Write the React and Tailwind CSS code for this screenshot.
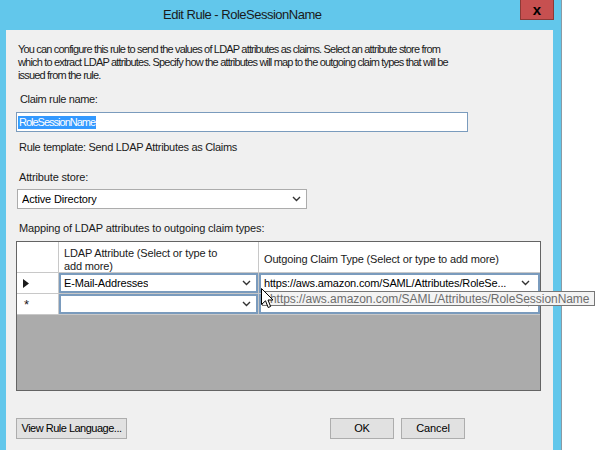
import React from "react";

const font = { fontFamily: '"Liberation Sans", Arial, sans-serif' };

const Chevron = () => (
  <svg width="9" height="6" viewBox="0 0 9 6" className="shrink-0">
    <path d="M1 1 L4.5 4.5 L8 1" fill="none" stroke="#333" strokeWidth="1.4" />
  </svg>
);

const Combo = ({ text, className = "" }) => (
  <div
    className={`flex h-full w-full items-center justify-between border border-[#7a9bbd] bg-white pl-[3px] pr-[5px] text-[11px] text-black ${className}`}
  >
    <span className="truncate whitespace-nowrap">{text}</span>
    <Chevron />
  </div>
);

const Button = ({ children, className = "" }) => (
  <div
    className={`flex h-[21px] items-center justify-center whitespace-nowrap border border-[#adadad] bg-[#e1e1e1] text-[11px] text-black ${className}`}
  >
    {children}
  </div>
);

const App = () => {
  return (
    <div className="relative flex h-[450px] w-[604px] overflow-hidden bg-white" style={font}>
      <div className="flex w-[562px] flex-col border-r border-[#8a9aa4] bg-[#62c7eb]">
        {/* title bar */}
        <div className="relative flex h-[30px] items-center pl-[163px]">
          <span className="text-[13px] tracking-[-0.5px] text-[#1a1a1a]">Edit Rule - RoleSessionName</span>
          <div className="absolute right-[7px] top-0 flex h-[20px] w-[34px] items-center justify-center border border-t-0 border-[#8c3a36] bg-[#c75050]">
            <span className="text-[15px] font-bold leading-none text-black">x</span>
          </div>
        </div>

        {/* client area */}
        <div className="ml-[6px] mr-[8px] flex flex-1 flex-col bg-[#f0f0f0] px-[10px] text-[11px] leading-[13px] tracking-[-0.15px] text-[#1a1a1a]">
          <p className="ml-[2px] mt-[13px] whitespace-nowrap tracking-[-0.82px]">
            You can configure this rule to send the values of LDAP attributes as claims. Select an attribute store from
            <br />
            which to extract LDAP attributes. Specify how the attributes will map to the outgoing claim types that will be
            <br />
            issued from the rule.
          </p>

          <div className="ml-[4px] mt-[11px] tracking-[-0.35px]">Claim rule name:</div>
          <div className="mt-[6px] flex h-[20px] w-[452px] items-center border border-[#7a9bbd] bg-white pl-[1px]">
            <span className="bg-[#3399ff] px-[1px] tracking-[-1px] text-white">RoleSessionName</span>
          </div>

          <div className="ml-[3px] mt-[9px] tracking-[-0.3px]">Rule template: Send LDAP Attributes as Claims</div>

          <div className="ml-[3px] mt-[17px]">Attribute store:</div>
          <div className="ml-[1px] mt-[5px] flex h-[20px] w-[290px]">
            <Combo text="Active Directory" className="border-[#acacac] pl-[4px]" />
          </div>

          <div className="ml-[3px] mt-[13px]">Mapping of LDAP attributes to outgoing claim types:</div>

          {/* grid */}
          <div className="mt-[6px] flex h-[150px] w-[525px] flex-col border border-[#646464] bg-[#ababab]">
            <div className="flex h-[31px] bg-white">
              <div className="w-[42px] border-b border-r border-[#c8c8c8]" />
              <div className="w-[200px] border-b border-r border-[#c8c8c8] px-[5px] pt-[5px] leading-[13px]">
                LDAP Attribute (Select or type to
                <br />
                add more)
              </div>
              <div className="flex-1 border-b border-[#c8c8c8] px-[5px] pt-[11px]">
                Outgoing Claim Type (Select or type to add more)
              </div>
            </div>
            <div className="flex h-[21px]">
              <div className="flex w-[42px] items-center border-b border-r border-[#c8c8c8] bg-white pl-[6px]">
                <svg width="6" height="9" viewBox="0 0 6 9">
                  <path d="M0 0 L6 4.5 L0 9 Z" fill="#1a1a1a" />
                </svg>
              </div>
              <div className="w-[200px] border-b border-r border-[#c8c8c8] bg-white">
                <Combo text="E-Mail-Addresses" className="border-2 border-[#6b8cae] pl-[3px]" />
              </div>
              <div className="flex-1 border-b border-[#c8c8c8] bg-white">
                <Combo
                  text="https://aws.amazon.com/SAML/Attributes/RoleSe..."
                  className="border-2 border-[#6b8cae] pl-[3px] pr-[8px]"
                />
              </div>
            </div>
            <div className="flex h-[21px]">
              <div className="flex w-[42px] items-center border-b border-r border-[#c8c8c8] bg-white pl-[7px] text-[13px]">
                <span className="leading-none">*</span>
              </div>
              <div className="w-[200px] border-b border-r border-[#c8c8c8] bg-white">
                <Combo text="" className="border-2 border-[#6b8cae]" />
              </div>
              <div className="flex-1 border-b border-[#c8c8c8] bg-white">
                <Combo text="" className="border-2 border-[#6b8cae]" />
              </div>
            </div>
          </div>

          {/* buttons */}
          <div className="mt-[27px] flex items-center">
            <Button className="w-[111px] tracking-[-0.5px]">View Rule Language...</Button>
            <div className="flex-1" />
            <Button className="w-[64px] border-[#3c7fb1]">OK</Button>
            <Button className="ml-[7px] w-[64px]">Cancel</Button>
            <div className="w-[78px]" />
          </div>
        </div>
      </div>

      {/* tooltip */}
      <div className="absolute left-[262px] top-[291px] flex h-[15px] w-[333px] items-center border border-[#767676] bg-[#f3f3f3] px-[7px] text-[12px] tracking-[-0.05px] text-[#6d6d6d]">
        https://aws.amazon.com/SAML/Attributes/RoleSessionName
      </div>

      {/* mouse cursor */}
      <svg className="absolute left-[261px] top-[288px]" width="13" height="21" viewBox="0 0 13 21">
        <path
          d="M0.5 0.5 L0.5 16.5 L4.5 12.8 L7.2 19.5 L9.6 18.5 L7 12 L12 12 Z"
          fill="#fff"
          stroke="#000"
          strokeWidth="1"
          strokeLinejoin="miter"
        />
      </svg>
    </div>
  );
};

export default App;
